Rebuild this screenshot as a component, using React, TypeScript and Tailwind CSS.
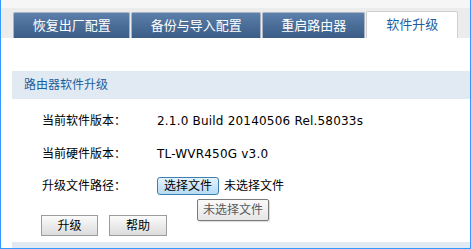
import React from 'react';

const tabs = [
  { label: '恢复出厂配置', w: 'w-[118px]' },
  { label: '备份与导入配置', w: 'w-[130px]' },
  { label: '重启路由器', w: 'w-[104px]' },
];

const font = 'font-["DejaVu_Sans","Noto_Sans_CJK_SC",sans-serif]';

export default function App() {
  return (
    <div
      className={`w-[471px] h-[249px] flex flex-col bg-white border-x border-b border-[#3399ff] text-[12px] text-black ${font}`}
    >
      {/* Tab strip */}
      <div className="h-[8px] bg-[#f6f6f6]" />
      <div className="h-[30px] bg-[#ececec] flex items-end pl-[12px] pr-[12px] gap-px">
        {tabs.map((t) => (
          <div
            key={t.label}
            className={`${t.w} h-[26px] flex items-center justify-center rounded-t-[2px] border border-b-0 border-[#aab4c2] bg-gradient-to-b from-[#5c80ab] to-[#3a5c86] text-white text-[13px]`}
          >
            {t.label}
          </div>
        ))}
        <div className="w-[92px] h-[27px] flex items-center justify-center rounded-t-[2px] border border-b-0 border-[#d0d0d0] bg-white text-[#1c5f9f] text-[13px]">
          软件升级
        </div>
      </div>

      {/* Content */}
      <div className="flex-1 flex flex-col pl-[11px] pt-[33px]">
        <div className="h-[28px] bg-[#e1eaf2] flex items-center pl-[12px] text-[#1c5f9f]">
          路由器软件升级
        </div>

        <div className="flex flex-col pl-[30px] pt-[6px]">
          <div className="h-[32px] flex items-center">
            <span className="w-[115px]">当前软件版本：</span>
            <span className="tracking-[0.2px]">2.1.0 Build 20140506 Rel.58033s</span>
          </div>
          <div className="h-[33px] flex items-center">
            <span className="w-[115px]">当前硬件版本：</span>
            <span className="tracking-[0.2px]">TL-WVR450G v3.0</span>
          </div>
          <div className="h-[31px] flex items-center relative">
            <span className="w-[115px]">升级文件路径：</span>
            <button className="h-[18px] px-[6px] border border-[#3c7fb1] rounded-[3px] bg-gradient-to-b from-[#e5f3fd] to-[#b6daf4] leading-none">
              选择文件
            </button>
            <span className="ml-[5px]">未选择文件</span>
            {/* Tooltip */}
            <div className="absolute left-[155px] top-[29px] h-[22px] px-[5px] flex items-center border border-[#7a7a7a] rounded-[2px] bg-gradient-to-b from-[#fafafa] to-[#e6e6e6] text-[#5a5a5a] shadow-[1px_1px_1px_rgba(0,0,0,0.15)]">
              未选择文件
            </div>
          </div>
        </div>

        <div className="flex gap-[11px] pl-[29px] mt-[14px]">
          <button className="w-[57px] h-[21px] border border-[#9c9c9c] bg-gradient-to-b from-[#fbfbfb] to-[#dcdcdc] leading-none">
            升级
          </button>
          <button className="w-[58px] h-[21px] border border-[#9c9c9c] bg-gradient-to-b from-[#fbfbfb] to-[#dcdcdc] leading-none">
            帮助
          </button>
        </div>

        <div className="mt-auto h-[6px] bg-[#e1eaf2]" />
      </div>
    </div>
  );
}
